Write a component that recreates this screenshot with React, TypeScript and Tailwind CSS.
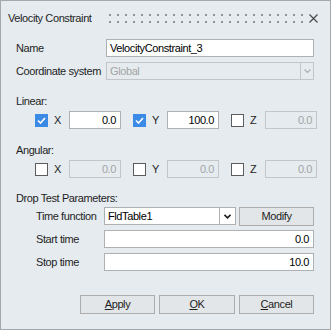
const Check = () => (
  <svg width="9" height="7" viewBox="0 0 9 7" fill="none">
    <path d="M1 3.5 L3.5 6 L8 1" stroke="white" strokeWidth="1.6" />
  </svg>
);

const CheckBox = ({ checked }: { checked?: boolean }) =>
  checked ? (
    <div className="w-[13px] h-[13px] bg-[#3b8ae6] flex items-center justify-center">
      <Check />
    </div>
  ) : (
    <div className="w-[13px] h-[13px] bg-white border border-[#5c5c5c]" />
  );

const Field = ({
  value,
  disabled,
  className,
}: {
  value: string;
  disabled?: boolean;
  className?: string;
}) => (
  <div
    className={`h-[18px] flex items-center justify-end pr-[4px] border ${
      disabled
        ? "border-[#c2c6c9] text-[#a4a4a4]"
        : "border-[#adb1b4] bg-white text-black"
    } ${className ?? ""}`}
  >
    {value}
  </div>
);

const AxisRow = ({ on }: { on: boolean[] }) => (
  <div className="flex items-center pl-[19px] gap-[12px]">
    {["X", "Y", "Z"].map((axis, i) => {
      const enabled = on[i];
      const value = axis === "Y" && enabled ? "100.0" : "0.0";
      return (
        <div key={axis} className="flex items-center">
          <CheckBox checked={enabled} />
          <span className="w-[21px] pl-[6px] text-[#1e1e1e]">{axis}</span>
          <Field value={value} disabled={!enabled} className="w-[52px]" />
        </div>
      );
    })}
  </div>
);

const Button = ({ children, className }: { children: any; className?: string }) => (
  <div
    className={`h-[19px] flex items-center justify-center border border-[#adadad] bg-[#e3e6e8] text-[#1e1e1e] ${
      className ?? ""
    }`}
  >
    {children}
  </div>
);

export default function App() {
  return (
    <div className="w-[331px] h-[330px] bg-[#e5ebef] border border-[#a3a8ac] font-['Liberation_Sans',Arial,sans-serif] text-[11px] tracking-[-0.4px] text-[#1e1e1e] flex flex-col">
      {/* title bar */}
      <div className="h-[35px] flex items-center pl-[7px] shrink-0">
        <span className="w-[100px]">Velocity Constraint</span>
        <svg width="196" height="9" className="shrink-0">
          <defs>
            <pattern id="grip" width="8" height="7" patternUnits="userSpaceOnUse">
              <rect x="1" y="0" width="2" height="2" fill="#8d9296" />
            </pattern>
          </defs>
          <rect x="0" y="0" width="196" height="9" fill="url(#grip)" />
        </svg>
        <svg width="9" height="9" viewBox="0 0 9 9" className="ml-[5px]">
          <path d="M0.5 0.5 L8.5 8.5 M8.5 0.5 L0.5 8.5" stroke="#4a4a4a" strokeWidth="1.2" />
        </svg>
      </div>

      <div className="pl-[15px] pr-[16px] pt-[3px] flex flex-col">
        <div className="flex items-center h-[18px]">
          <span className="w-[90px]">Name</span>
          <div className="flex-1 h-[18px] bg-white border border-[#adb1b4] flex items-center pl-[3px] text-black">
            VelocityConstraint_3
          </div>
        </div>

        <div className="flex items-center h-[18px] mt-[5px]">
          <span className="w-[90px]">Coordinate system</span>
          <div className="flex-1 h-[18px] border border-[#c2c6c9] flex items-center text-[#a4a4a4]">
            <span className="flex-1 pl-[3px]">Global</span>
            <div className="w-[13px] h-full border-l border-[#c2c6c9] flex items-center justify-center">
              <svg width="7" height="4" viewBox="0 0 7 4">
                <path d="M0.5 0.5 L3.5 3.5 L6.5 0.5" stroke="#b0b4b8" strokeWidth="1.3" fill="none" />
              </svg>
            </div>
          </div>
        </div>

        <div className="mt-[14px] h-[14px] flex items-center">Linear:</div>
        <div className="mt-[3px]">
          <AxisRow on={[true, true, false]} />
        </div>

        <div className="mt-[14px] h-[14px] flex items-center">Angular:</div>
        <div className="mt-[3px]">
          <AxisRow on={[false, false, false]} />
        </div>

        <div className="mt-[13px] h-[14px] flex items-center">Drop Test Parameters:</div>

        <div className="mt-[2px] pl-[20px] flex flex-col gap-[5px]">
          <div className="flex items-center h-[18px]">
            <span className="w-[68px]">Time function</span>
            <div className="w-[132px] h-[18px] bg-white border border-[#adb1b4] flex items-center text-black">
              <span className="flex-1 pl-[3px]">FldTable1</span>
              <div className="w-[16px] h-full border-l border-[#adb1b4] flex items-center justify-center">
                <svg width="7" height="5" viewBox="0 0 7 5">
                  <path d="M0.5 0.8 L3.5 3.8 L6.5 0.8" stroke="#1e1e1e" strokeWidth="1.6" fill="none" />
                </svg>
              </div>
            </div>
            <Button className="ml-[3px] w-[75px] h-[18px]">Modify</Button>
          </div>
          <div className="flex items-center h-[18px]">
            <span className="w-[68px]">Start time</span>
            <Field value="0.0" className="flex-1" />
          </div>
          <div className="flex items-center h-[18px]">
            <span className="w-[68px]">Stop time</span>
            <Field value="10.0" className="flex-1" />
          </div>
        </div>

        <div className="mt-[24px] flex justify-end gap-[4px]">
          <Button className="w-[75px]">
            <span>
              <span className="underline">A</span>pply
            </span>
          </Button>
          <Button className="w-[76px]">
            <span>
              <span className="underline">O</span>K
            </span>
          </Button>
          <Button className="w-[75px]">
            <span>
              <span className="underline">C</span>ancel
            </span>
          </Button>
        </div>
      </div>
    </div>
  );
}
